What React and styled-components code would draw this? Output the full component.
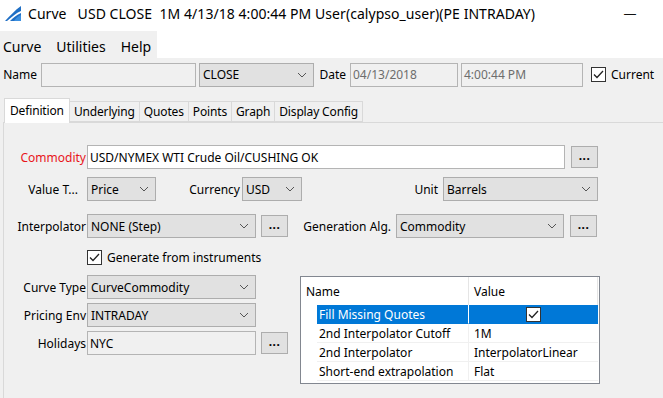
import React from 'react'
import styled, { createGlobalStyle } from 'styled-components'

const GlobalStyle = createGlobalStyle`
  html, body { margin: 0; padding: 0; background: #f0f0f0; }
  body { font-family: "Noto Sans", "Open Sans", sans-serif; font-size: 12px; color: #000; overflow: hidden; }
  * { box-sizing: border-box; }
`;

const Chevron = () => (
    <svg width="10" height="6" viewBox="0 0 10 6">
        <path d="M1 1 L5 5 L9 1" fill="none" stroke="#555" strokeWidth="1" />
    </svg>
);

const Check = ({ size = 15 }) => (
    <CheckBox $size={size}>
        <svg width="11" height="9" viewBox="0 0 11 9">
            <path d="M1 4.5 L4 7.5 L10 1" fill="none" stroke="#222" strokeWidth="1.3" />
        </svg>
    </CheckBox>
);

const Combo = ({ w, children }) => (
    <ComboBox $w={w}>
        <span>{children}</span>
        <Chevron />
    </ComboBox>
);

export default function App() {
    const props = [
        { name: 'Fill Missing Quotes', value: null, selected: true },
        { name: '2nd Interpolator Cutoff', value: '1M' },
        { name: '2nd Interpolator', value: 'InterpolatorLinear' },
        { name: 'Short-end extrapolation', value: 'Flat' },
    ];

    return (
        <Window>
            <GlobalStyle />
            {/* 타이틀바 */}
            <TitleBar>
                <svg width="16" height="15" viewBox="0 0 16 15">
                    <path d="M0 15 C5 10 10 4 16 0 L16 15 Z" fill="#1f6fc5" />
                    <path d="M2 15 C7 11 11 7 16 5 L16 7 C11 9 8 12 5 15 Z" fill="#ffffff" />
                    <path d="M9 15 C11 12 13 10 16 9 L16 15 Z" fill="#3b8fe0" />
                </svg>
                <TitleText>Curve&nbsp;&nbsp; USD CLOSE&nbsp; 1M 4/13/18 4:00:44 PM User(calypso_user)(PE INTRADAY)</TitleText>
                <Minimize>—</Minimize>
            </TitleBar>

            <MenuBar>
                <MenuGroup>
                    <MenuItem>Curve</MenuItem>
                    <MenuItem>Utilities</MenuItem>
                    <MenuItem>Help</MenuItem>
                </MenuGroup>
            </MenuBar>

            <Body>
                <NameRow>
                    <Label $w={41} $pr={4}>Name</Label>
                    <TextBox $w={155} $bg="#f0f0f0" />
                    <Spacer $w={3} />
                    <Combo w={115}>CLOSE</Combo>
                    <Label $w={36} $pr={4}>Date</Label>
                    <TextBox $w={108} $bg="#f0f0f0" $muted>04/13/2018</TextBox>
                    <Spacer $w={3} />
                    <TextBox $w={122} $bg="#f0f0f0" $muted>4:00:44 PM</TextBox>
                    <Spacer $w={8} />
                    <Check />
                    <CheckLabel>Current</CheckLabel>
                </NameRow>

                <TabBar>
                    <Tab $active>Definition</Tab>
                    <Tab>Underlying</Tab>
                    <Tab>Quotes</Tab>
                    <Tab>Points</Tab>
                    <Tab>Graph</Tab>
                    <Tab>Display Config</Tab>
                </TabBar>

                <Panel>
                    <Row $mt={22}>
                        <Label $w={83} $pr={1} $color="#e8141b">Commodity</Label>
                        <TextBox $w={478} $bg="#fff">USD/NYMEX WTI Crude Oil/CUSHING OK</TextBox>
                        <DotsButton $ml={6}>...</DotsButton>
                    </Row>
                    <Row $mt={8}>
                        <Label $w={83} $pr={9}>Value T...</Label>
                        <Combo w={69}>Price</Combo>
                        <Label $w={86} $pr={2}>Currency</Label>
                        <Combo w={60}>USD</Combo>
                        <Label $w={141} $pr={5}>Unit</Label>
                        <Combo w={155}>Barrels</Combo>
                    </Row>
                    <Row $mt={13}>
                        <Label $w={83} $pr={1}>Interpolator</Label>
                        <Combo w={169}>NONE (Step)</Combo>
                        <DotsButton $ml={5}>...</DotsButton>
                        <Label $w={108} $pr={5}>Generation Alg.</Label>
                        <Combo w={168}>Commodity</Combo>
                        <DotsButton $ml={6}>...</DotsButton>
                    </Row>
                    <CheckRow>
                        <Check />
                        <CheckLabel>Generate from instruments</CheckLabel>
                    </CheckRow>

                    <Bottom>
                        <LeftCol>
                            <Row>
                                <Label $w={83} $pr={1}>Curve Type</Label>
                                <Combo w={169}>CurveCommodity</Combo>
                            </Row>
                            <Row $mt={4}>
                                <Label $w={83} $pr={1}>Pricing Env</Label>
                                <Combo w={169}>INTRADAY</Combo>
                            </Row>
                            <Row $mt={4}>
                                <Label $w={83} $pr={1}>Holidays</Label>
                                <TextBox $w={169} $bg="#f0f0f0">NYC</TextBox>
                                <DotsButton $ml={5}>...</DotsButton>
                            </Row>
                        </LeftCol>

                        <PropTable>
                            <HeadRow>
                                <HeadCell>Name</HeadCell>
                                <HeadCell $value>Value</HeadCell>
                            </HeadRow>
                            {props.map((p) => (
                                <DataRow key={p.name}>
                                    <Indent />
                                    <NameCell $selected={p.selected}>{p.name}</NameCell>
                                    <ValueCell $selected={p.selected}>
                                        {p.value === null ? <Check /> : p.value}
                                    </ValueCell>
                                </DataRow>
                            ))}
                        </PropTable>
                    </Bottom>
                </Panel>
            </Body>
        </Window>
    )
}

const Window = styled.div`
width: 663px;
height: 398px;
display: flex;
flex-direction: column;
background: #f0f0f0;
`;

const TitleBar = styled.div`
height: 31px;
background: #fff;
display: flex;
align-items: center;
padding-left: 5px;
padding-bottom: 5px;
`;

const TitleText = styled.div`
margin-left: 7px;
font-size: 14px;
letter-spacing: 0.05px;
color: #000;
white-space: nowrap;
flex: 1;
`;

const Minimize = styled.div`
width: 30px;
margin-right: 18px;
text-align: center;
font-size: 13px;
color: #111;
`;

const MenuBar = styled.div`
height: 27px;
background: #fff;
display: flex;
`;

const MenuGroup = styled.div`
background: #f0f0f0;
width: 157px;
display: flex;
align-items: center;
gap: 15px;
padding-left: 3px;
padding-top: 4px;
`;

const MenuItem = styled.span`
font-size: 14px;
`;

const Body = styled.div`
flex: 1;
display: flex;
flex-direction: column;
`;

const NameRow = styled.div`
display: flex;
align-items: center;
height: 25px;
margin-top: 4px;
`;

const Row = styled.div`
display: flex;
align-items: center;
height: 24px;
margin-top: ${(p) => p.$mt || 0}px;
`;

const Spacer = styled.div`
width: ${(p) => p.$w}px;
flex-shrink: 0;
`;

const Label = styled.div`
width: ${(p) => p.$w}px;
flex-shrink: 0;
text-align: right;
padding-right: ${(p) => p.$pr || 0}px;
color: ${(p) => p.$color || '#000'};
white-space: nowrap;
`;

const TextBox = styled.div`
width: ${(p) => p.$w}px;
height: 24px;
flex-shrink: 0;
background: ${(p) => p.$bg};
border: 1px solid #b4b4b4;
padding: 0 2px;
display: flex;
align-items: center;
color: ${(p) => (p.$muted ? '#6d6d6d' : '#000')};
white-space: nowrap;
`;

const ComboBox = styled.div`
width: ${(p) => p.$w}px;
height: 24px;
flex-shrink: 0;
background: #e1e1e1;
border: 1px solid #adadad;
display: flex;
align-items: center;
justify-content: space-between;
padding: 0 6px 0 3px;
white-space: nowrap;
`;

const DotsButton = styled.div`
width: 27px;
height: 22px;
flex-shrink: 0;
margin-left: ${(p) => p.$ml}px;
background: #e1e1e1;
border: 1px solid #adadad;
display: flex;
align-items: center;
justify-content: center;
font-size: 12px;
font-weight: 700;
letter-spacing: 0.5px;
padding-bottom: 3px;
`;

const CheckBox = styled.div`
width: ${(p) => p.$size}px;
height: ${(p) => p.$size}px;
flex-shrink: 0;
background: #fff;
border: 1px solid #333;
display: flex;
align-items: center;
justify-content: center;
`;

const CheckLabel = styled.span`
margin-left: 5px;
white-space: nowrap;
`;

const TabBar = styled.div`
display: flex;
align-items: flex-end;
height: 24px;
margin-top: 11px;
padding-left: 4px;
position: relative;
z-index: 1;
`;

const Tab = styled.div`
height: ${(p) => (p.$active ? 25 : 21)}px;
padding: 0 ${(p) => (p.$active ? 5 : 4)}px;
margin-bottom: ${(p) => (p.$active ? -1 : 0)}px;
background: ${(p) => (p.$active ? '#fff' : '#f0f0f0')};
border: 1px solid #d9d9d9;
border-bottom: ${(p) => (p.$active ? 'none' : '1px solid #d9d9d9')};
border-left: ${(p) => (p.$active ? '1px solid #d9d9d9' : 'none')};
display: flex;
align-items: center;
padding-bottom: ${(p) => (p.$active ? 2 : 0)}px;
letter-spacing: -0.15px;
white-space: nowrap;
`;

const Panel = styled.div`
flex: 1;
margin-left: 3px;
border-left: 1px solid #d9d9d9;
border-top: 1px solid #d9d9d9;
display: flex;
flex-direction: column;
`;

const CheckRow = styled.div`
display: flex;
align-items: center;
height: 16px;
margin-top: 11px;
padding-left: 83px;
`;

const Bottom = styled.div`
display: flex;
align-items: flex-start;
margin-top: 10px;
`;

const LeftCol = styled.div`
width: 296px;
display: flex;
flex-direction: column;
`;

const PropTable = styled.div`
width: 300px;
height: 108px;
margin-top: 1px;
background: #fff;
border: 1px solid #828790;
display: flex;
flex-direction: column;
`;

const HeadRow = styled.div`
display: grid;
grid-template-columns: 167px 130px;
height: 28px;
`;

const HeadCell = styled.div`
display: flex;
align-items: center;
padding-left: 5px;
border-left: ${(p) => (p.$value ? '1px solid #e5e5e5' : 'none')};
border-right: ${(p) => (p.$value ? '1px solid #e5e5e5' : 'none')};
`;

const DataRow = styled.div`
display: grid;
grid-template-columns: 16px 151px 130px;
height: 19px;
`;

const Indent = styled.div`
background: #fff;
`;

const NameCell = styled.div`
display: flex;
align-items: center;
padding-left: 2px;
background: ${(p) => (p.$selected ? '#0078d7' : '#fff')};
color: ${(p) => (p.$selected ? '#fff' : '#000')};
border-bottom: 1px solid ${(p) => (p.$selected ? '#0078d7' : '#f0f0f0')};
white-space: nowrap;
`;

const ValueCell = styled.div`
display: flex;
align-items: center;
justify-content: ${(p) => (p.$selected ? 'center' : 'flex-start')};
padding-left: ${(p) => (p.$selected ? 0 : 5)}px;
background: ${(p) => (p.$selected ? '#0078d7' : '#fff')};
border-left: 1px solid ${(p) => (p.$selected ? '#fff' : '#f0f0f0')};
border-bottom: 1px solid ${(p) => (p.$selected ? '#0078d7' : '#f0f0f0')};
white-space: nowrap;
`;
